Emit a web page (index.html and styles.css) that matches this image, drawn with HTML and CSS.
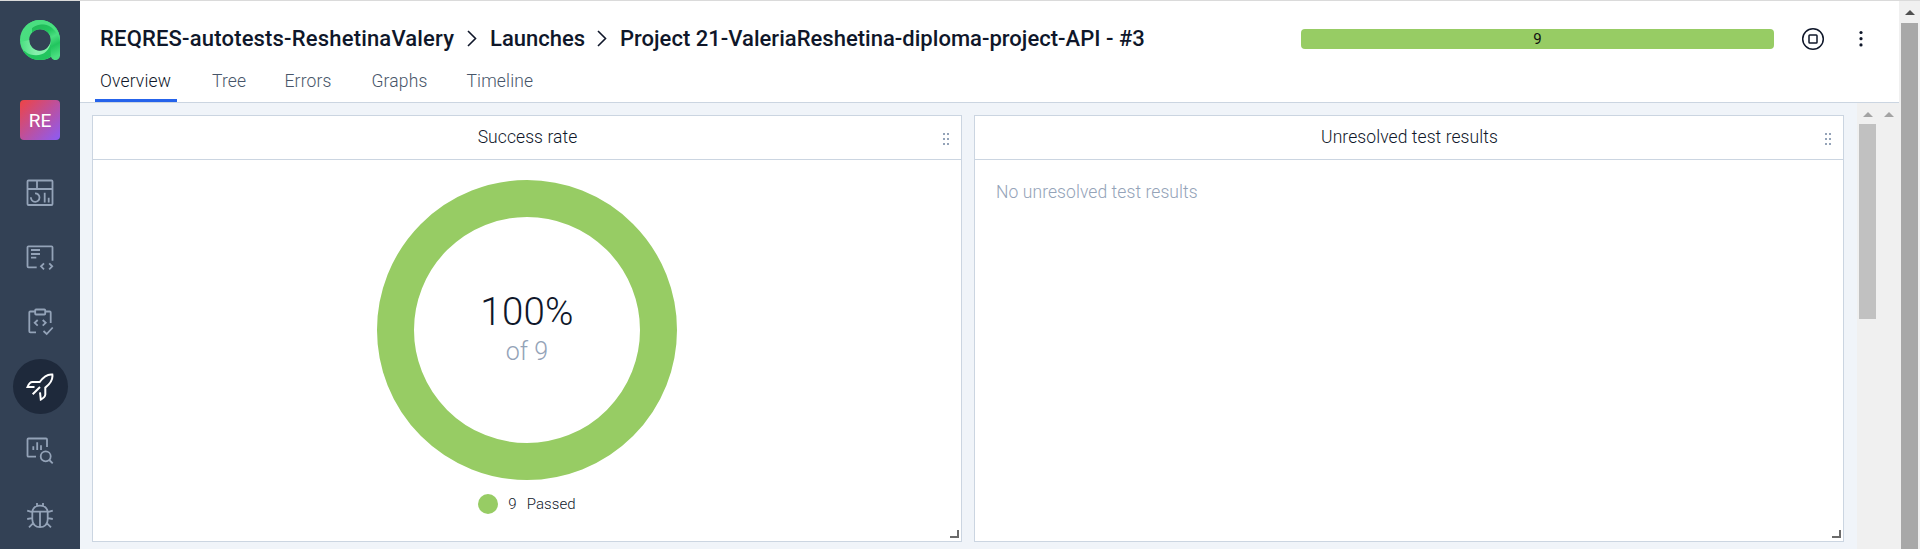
FILE: index.html
```
<!DOCTYPE html>
<html lang="en">
<head>
<meta charset="utf-8">
<title>Launch overview</title>
<link rel="stylesheet" href="styles.css">
</head>
<body>
<div class="app">
  <aside class="sidebar">
    <svg class="logo" viewBox="0 0 40 40">
      <defs>
        <linearGradient id="ring" x1="0" y1="0" x2="1" y2="0.3"><stop offset="0" stop-color="#4ade80"/><stop offset="1" stop-color="#45db7c"/></linearGradient>
        <linearGradient id="stem" x1="0.2" y1="0" x2="0.6" y2="1"><stop offset="0" stop-color="#22b858"/><stop offset="0.3" stop-color="#22c55e"/><stop offset="0.5" stop-color="#4ade80"/><stop offset="0.72" stop-color="#22c55e"/><stop offset="1" stop-color="#4ade80"/></linearGradient>
        <linearGradient id="low" x1="0" y1="0" x2="1" y2="0"><stop offset="0" stop-color="#4ade80"/><stop offset="0.5" stop-color="#86efac"/><stop offset="1" stop-color="#86efac"/></linearGradient>
      </defs>
      <circle cx="20" cy="20" r="15.400" fill="none" stroke="url(#ring)" stroke-width="9.200"/>
      <path d="M20 40C28 40 33 36 35 30L31 20C31 27 26 31 20 31C14 31 6 31 3 31C7 37 13 40 20 40Z" fill="#22c55e"/>
      <path d="M0.500 22C2 31 8 35.300 16 35.300C24 35.300 30 30 31 21C29 27.500 25 30.900 20 30.900C14 30.900 9.200 26 9.200 20Z" fill="url(#low)"/>
      <path d="M12 8C18 3.500 25 4 31 3.200C37 7 40 14 40 21V35.500A4.600 4.600 0 0 1 30.800 35.500V20C30.800 13.500 26 9.200 20 9.200C17 9.200 14 10.500 12 12.500Z" fill="url(#stem)"/>
      <path d="M9 12C13 3.500 24 2 31.500 7.500C36 11 39 16 40 21C40 9 31 0 20 0C14 0 9 3 6 6Z" fill="#4ade80"/>
    </svg>
    <div class="project">RE</div>
    <nav class="nav">
      <a class="nav-item"><svg viewBox="0 0 28 28"><rect x="1.500" y="1.500" width="25" height="24.500" rx="1"/><path d="M1.500 10H26.500M11 1.500V10M9 14.300A4.300 4.300 0 1 1 4.900 18.300M18.700 13.700V23.500M22.700 18.700V23.500"/></svg></a>
      <a class="nav-item"><svg viewBox="0 0 28 28"><path d="M26.500 17.700V4.300Q26.500 3.300 25.500 3.300H2.500Q1.500 3.300 1.500 4.300V23.300Q1.500 24.300 2.500 24.300H10.700M5 7H14M5 11H14M5 14.700H10.300M18 20.300 15 23.300 18 26.300M23.200 20.300 26.200 23.300 23.200 26.300"/></svg></a>
      <a class="nav-item"><svg viewBox="0 0 28 28"><rect x="9.200" y="1.500" width="10" height="5" rx=".8"/><path d="M9.200 3.500H4.300Q3.300 3.500 3.300 4.500V23.300Q3.300 24.300 4.300 24.300H10M19.200 3.500H23.700Q24.700 3.500 24.700 4.500V15M11.700 12 8.700 14.800 11.700 17.600M16.700 12 19.700 14.800 16.700 17.600M17.500 23 20.700 26 26.700 19.500"/></svg></a>
      <a class="nav-item active"><svg viewBox="0 0 28 28"><path d="M8.500 14H1.500Q3.500 9 6.300 9H13.700C17.500 3.800 21.500 .8 26.300 1.500C27.200 6.500 24.500 10.500 19.300 14.600V21.500Q19 24.500 14.800 26.500L14 19.300M14 14 6.700 21.300"/></svg></a>
      <a class="nav-item"><svg viewBox="0 0 28 28"><path d="M21 10V2.500Q21 1.500 20 1.500H2.500Q1.500 1.500 1.500 2.500V18.700Q1.500 19.700 2.500 19.700H10M7.300 9.300V12.900M11.200 5.300V12.900M15 8.300V12.900M23.300 23 26.700 26.400"/><circle cx="19.700" cy="19.300" r="5"/></svg></a>
      <a class="nav-item"><svg viewBox="0 0 28 28"><path d="M6.300 9.700H21.700V17.500C21.700 22 18.500 25.200 14 25.200S6.300 22 6.300 17.500ZM6.300 9.700C7 6 10 3.700 14 3.700S21 6 21.700 9.700M14 9.700V25.200M11 1V4M17 1V4M1.200 8.700 6.300 10.200M26.800 8.700 21.700 10.200M1.200 17 6.300 16.200M26.800 17 21.700 16.200M3 25.300 7.700 20.700M25 25.300 20.300 20.700"/></svg></a>
    </nav>
  </aside>

  <div class="main">
    <header class="header">
      <div class="title-row">
        <h1 class="crumbs">
          <span class="crumb crumb-project">REQRES-autotests-ReshetinaValery</span>
          <svg class="chevron" viewBox="0 0 10 17"><path d="M1 1 8.500 8.500 1 16"/></svg>
          <span class="crumb crumb-section">Launches</span>
          <svg class="chevron" viewBox="0 0 10 17"><path d="M1 1 8.500 8.500 1 16"/></svg>
          <span class="crumb crumb-launch">Project 21-ValeriaReshetina-diploma-project-API - #3</span>
        </h1>
        <div class="progress">9</div>
        <svg class="stop" viewBox="0 0 24 24"><circle cx="12" cy="12" r="10.300"/><rect x="8" y="8" width="8" height="8" rx=".8"/></svg>
        <svg class="more" viewBox="0 0 4 18"><circle cx="2" cy="2.500" r="1.600"/><circle cx="2" cy="8.700" r="1.600"/><circle cx="2" cy="14.900" r="1.600"/></svg>
      </div>
      <nav class="tabs">
        <a class="tab selected">Overview</a>
        <a class="tab tab-tree">Tree</a>
        <a class="tab tab-errors">Errors</a>
        <a class="tab tab-graphs">Graphs</a>
        <a class="tab tab-timeline">Timeline</a>
      </nav>
    </header>

    <div class="content">
      <main class="widgets">
        <section class="widget">
          <div class="widget-head"><h2>Success rate</h2><svg class="grip" viewBox="0 0 8 14"><path d="M1 1h2v2H1zM5 1h2v2H5zM1 6h2v2H1zM5 6h2v2H5zM1 11h2v2H1zM5 11h2v2H5z"/></svg></div>
          <div class="chart">
            <div class="donut"><span class="percent">100%</span><span class="total">of 9</span></div>
            <div class="legend"><i class="dot"></i><span class="count">9</span><span>Passed</span></div>
          </div>
          <i class="resize"></i>
        </section>
        <section class="widget">
          <div class="widget-head"><h2>Unresolved test results</h2><svg class="grip" viewBox="0 0 8 14"><path d="M1 1h2v2H1zM5 1h2v2H5zM1 6h2v2H1zM5 6h2v2H5zM1 11h2v2H1zM5 11h2v2H5z"/></svg></div>
          <p class="empty">No unresolved test results</p>
          <i class="resize"></i>
        </section>
      </main>
      <div class="scroll inner"><i class="arrow"></i><i class="thumb"></i></div>
      <div class="scroll outer"><i class="arrow"></i></div>
    </div>
  </div>

  <div class="scroll page"><i class="arrow"></i><i class="thumb"></i></div>
</div>
</body>
</html>
```
FILE: styles.css
```
* { box-sizing: border-box; }

body {
  margin: 0;
  overflow: hidden;
  background: #fff;
  color: #0f172a;
  font: 300 17.5px/24px Roboto, "Liberation Sans", sans-serif;
  letter-spacing: .08px;
}

h1, h2, p { margin: 0; font: inherit; }

.app {
  display: flex;
  height: 549px;
  border-top: 1px solid #dadada;
}

/* Sidebar */
.sidebar {
  display: flex;
  flex-direction: column;
  align-items: center;
  flex: none;
  width: 80px;
  padding-top: 19px;
  background: #334155;
  overflow: hidden;
}
.logo { width: 40px; height: 40px; flex: none; }
.project {
  flex: none;
  width: 40px;
  height: 40px;
  margin-top: 40px;
  border-radius: 4px;
  background: linear-gradient(135deg, #ef4444, #8b5cf6);
  color: #fff;
  font-size: 19px;
  font-weight: 400;
  line-height: 42px;
  text-align: center;
}
.nav { margin-top: 20px; }
.nav-item {
  display: flex;
  align-items: center;
  justify-content: center;
  width: 55px;
  height: 55px;
  margin: 5px 0 9.7px;
  border-radius: 50%;
}
.nav-item.active { background: #1e293b; }
.nav-item svg {
  width: 28px;
  height: 28px;
  fill: none;
  stroke: #94a3b8;
  stroke-width: 1.8;
}
.nav-item.active svg { stroke: #fff; stroke-width: 2; }

/* Header */
.main { display: flex; flex: 1; flex-direction: column; min-width: 0; }
.header {
  display: flex;
  flex-direction: column;
  flex: none;
  height: 102px;
  border-bottom: 1px solid #cbd5e1;
}
.title-row { display: flex; align-items: center; height: 75px; padding-left: 20px; }
.crumbs {
  display: flex;
  align-items: center;
  width: 1201px;
  font-size: 22px;
  font-weight: 500;
  line-height: 28px;
  white-space: nowrap;
}
.crumb-project { width: 367px; letter-spacing: .18px; }
.crumb-section { width: 107px; letter-spacing: 0; }
.crumb-launch { letter-spacing: .02px; }
.chevron {
  width: 10px;
  height: 17px;
  margin-right: 13px;
  fill: none;
  stroke: #0f172a;
  stroke-width: 1.6;
}
.progress {
  width: 473px;
  height: 20px;
  border-radius: 4px;
  background: #97cc64;
  color: #111;
  font-size: 15px;
  font-weight: 400;
  line-height: 20px;
  text-align: center;
}
.stop {
  width: 24px;
  height: 24px;
  margin-left: 26.5px;
  fill: none;
  stroke: #0f172a;
  stroke-width: 1.5;
}
.more { width: 4px; height: 18px; margin-left: 34px; fill: #0f172a; }
.tabs { display: flex; height: 26px; padding-left: 15px; color: #475569; }
.tab { flex: none; height: 26px; line-height: 10px; letter-spacing: .15px; }
.selected {
  width: 82px;
  margin-right: 35px;
  padding-left: 5px;
  border-bottom: 3px solid #2563eb;
  color: #0f172a;
}
.tab-tree { width: 72.5px; }
.tab-errors { width: 87px; }
.tab-graphs { width: 95px; }

/* Widgets */
.content { display: flex; flex: 1; background: #f0f0f0; }
.widgets {
  display: flex;
  gap: 12px;
  width: 1777px;
  padding: 12px 13px 7px 12px;
  background: #f0f4f9;
}
.widget {
  display: flex;
  flex-direction: column;
  flex: 1;
  position: relative;
  border: 1px solid #cbd5e1;
  background: #fff;
}
.widget-head {
  display: flex;
  align-items: center;
  height: 44px;
  padding: 0 11px 0 12px;
  border-bottom: 1px solid #cbd5e1;
}
.widget-head h2 { flex: 1; padding-left: 8px; text-align: center; line-height: 40px; margin-bottom: 2px; }
.grip { width: 8px; height: 14px; margin-top: 2px; fill: #94a3b8; }
.chart { display: flex; flex-direction: column; align-items: center; padding-top: 20px; }
.donut {
  display: flex;
  flex-direction: column;
  align-items: center;
  width: 300px;
  height: 300px;
  padding-top: 73px;
  border: 37.5px solid #97cc64;
  border-radius: 50%;
}
.percent { font-size: 38.5px; line-height: 44px; letter-spacing: .2px; }
.total { color: #94a3b8; font-size: 25px; line-height: 35px; }
.legend { display: flex; align-items: center; margin-top: 14px; font-size: 15px; line-height: 20px; }
.dot { width: 20px; height: 20px; margin-right: 10px; border-radius: 50%; background: #97cc64; }
.count { margin-right: 10px; }
.empty { padding: 20px 21px; color: #94a3b8; }
.resize {
  position: absolute;
  right: 2px;
  bottom: 3px;
  width: 9px;
  height: 8px;
  border: solid #6b6b6b;
  border-width: 0 2px 2px 0;
}

/* Scrollbars */
.scroll { display: flex; flex-direction: column; align-items: center; background: #f0f0f0; }
.arrow {
  flex: none;
  width: 0;
  height: 0;
  border: solid transparent;
  border-width: 0 5px 5px;
  border-bottom-color: #a3a3a3;
}
.inner { width: 21px; padding-top: 9px; }
.outer { width: 21px; padding-top: 9px; }
.inner .thumb { width: 17px; height: 195px; margin-top: 7px; margin-right: 1px; background: #c1c1c1; }
.page { flex: none; width: 21px; padding-top: 9px; }
.page .arrow { border-bottom-color: #505050; }
.page .thumb { width: 17px; height: 526px; margin-top: 8px; background: #a8a8a8; }
```
